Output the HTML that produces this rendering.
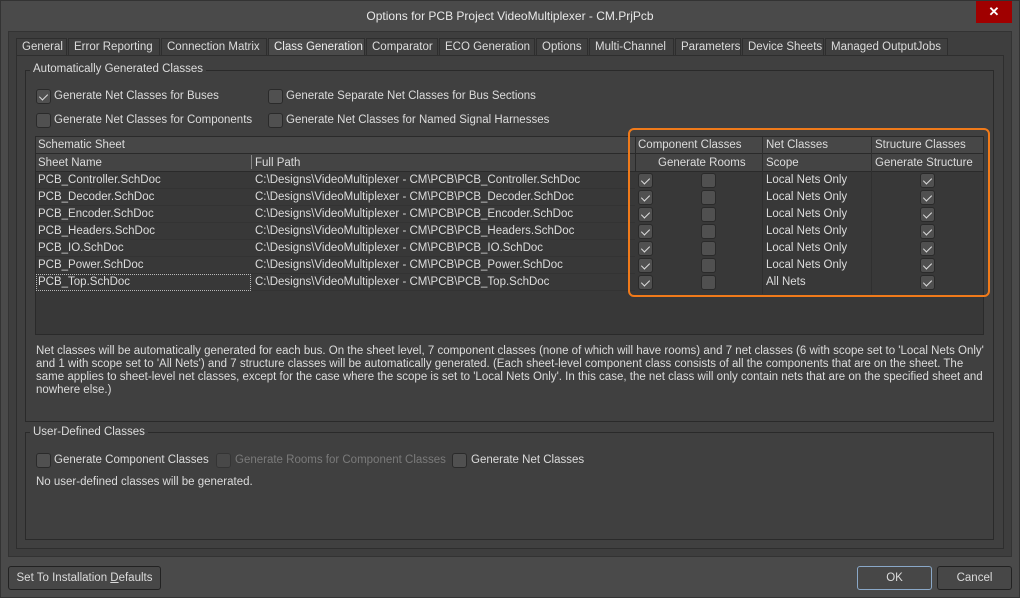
<!DOCTYPE html><html><head><style>
*{box-sizing:border-box;margin:0;padding:0}
body{width:1020px;height:598px;background:#4a4a4a;font-family:"Liberation Sans",sans-serif;font-size:11.5px;color:#dcdcdc;position:relative;overflow:hidden}
.a{position:absolute;white-space:nowrap;padding-top:1px}
.cb{position:absolute;width:15px;height:15px;border:1px solid #2a2a2a;background:#505050;border-radius:3px}
.cb.c::after{content:"";position:absolute;left:4px;top:2px;width:4px;height:7px;border:solid #ddd;border-width:0 1px 1px 0;transform:rotate(45deg)}
.tab{position:absolute;top:38px;height:18px;background:#3f3f3f;border:1px solid #2e2e2e;border-bottom:none;padding:2px 0 0 5px;white-space:nowrap;overflow:hidden}
.btn{position:absolute;height:24px;border:1px solid #222;border-radius:3px;background:#474747;text-align:center;line-height:22px}
</style></head><body>
<div class="a" style="left:0;top:0;width:1020px;height:598px;border:1px solid #333"></div>
<div class="a" style="left:0;top:8px;width:1020px;text-align:center;font-size:12px;color:#e8e8e8">Options for PCB Project VideoMultiplexer - CM.PrjPcb</div>
<div class="a" style="left:976px;top:1px;width:36px;height:22px;background:#a00000;color:#fff;text-align:center;line-height:20px;font-size:13px;font-weight:bold">✕</div>
<div class="a" style="left:8px;top:31px;width:1004px;height:526px;background:#3e3e3e;border:1px solid #333"></div>
<div class="tab" style="left:16px;width:51px">General</div>
<div class="tab" style="left:68px;width:92px">Error Reporting</div>
<div class="tab" style="left:161px;width:106px">Connection Matrix</div>
<div class="tab" style="left:268px;width:97px;background:#4a4a4a;height:19px;color:#eee">Class Generation</div>
<div class="tab" style="left:366px;width:72px">Comparator</div>
<div class="tab" style="left:439px;width:96px">ECO Generation</div>
<div class="tab" style="left:536px;width:52px">Options</div>
<div class="tab" style="left:589px;width:85px">Multi-Channel</div>
<div class="tab" style="left:675px;width:66px">Parameters</div>
<div class="tab" style="left:742px;width:82px">Device Sheets</div>
<div class="tab" style="left:825px;width:123px">Managed OutputJobs</div>
<div class="a" style="left:16px;top:55px;width:988px;height:494px;background:#404040;border:1px solid #2e2e2e"></div>
<div class="a" style="left:25px;top:70px;width:969px;height:352px;border:1px solid #2a2a2a"></div>
<div class="a" style="left:30px;top:63px;background:#404040;padding:0 3px">Automatically Generated Classes</div>
<div class="cb c" style="left:36px;top:89px"></div><div class="a" style="left:54px;top:89px">Generate Net Classes for Buses</div>
<div class="cb" style="left:268px;top:89px"></div><div class="a" style="left:286px;top:89px">Generate Separate Net Classes for Bus Sections</div>
<div class="cb" style="left:36px;top:113px"></div><div class="a" style="left:54px;top:113px">Generate Net Classes for Components</div>
<div class="cb" style="left:268px;top:113px"></div><div class="a" style="left:286px;top:113px">Generate Net Classes for Named Signal Harnesses</div>
<div class="a" style="left:35px;top:136px;width:949px;height:199px;background:#383838;border:1px solid #2a2a2a"></div>
<div class="a" style="left:36px;top:137px;width:947px;height:17px;background:#474747;border-bottom:1px solid #2a2a2a"></div>
<div class="a" style="left:36px;top:154px;width:947px;height:18px;background:#444;border-bottom:1px solid #2a2a2a"></div>
<div class="a" style="left:38px;top:138px">Schematic Sheet</div>
<div class="a" style="left:638px;top:138px">Component Classes</div>
<div class="a" style="left:766px;top:138px">Net Classes</div>
<div class="a" style="left:875px;top:138px">Structure Classes</div>
<div class="a" style="left:38px;top:156px">Sheet Name</div>
<div class="a" style="left:255px;top:156px">Full Path</div>
<div class="a" style="left:658px;top:156px">Generate Rooms</div>
<div class="a" style="left:766px;top:156px">Scope</div>
<div class="a" style="left:875px;top:156px">Generate Structure</div>
<div class="a" style="left:251px;top:155px;width:1px;height:14px;background:#888"></div>
<div class="a" style="left:635px;top:137px;width:1px;height:35px;background:#2a2a2a"></div>
<div class="a" style="left:762px;top:137px;width:1px;height:157px;background:#2f2f2f"></div>
<div class="a" style="left:871px;top:137px;width:1px;height:157px;background:#2f2f2f"></div>
<div id="rows"></div>
<div class="a" style="left:36px;top:274px;width:215px;height:17px;border:1px dotted #bbb"></div>
<div class="a" style="left:628px;top:128px;width:362px;height:169px;border:2px solid #f07a1a;border-radius:6px"></div>
<div class="a" style="left:36px;top:344px;line-height:13px;white-space:normal;width:950px">Net classes will be automatically generated for each bus. On the sheet level, 7 component classes (none of which will have rooms) and 7 net classes (6 with scope set to 'Local Nets Only' and 1 with scope set to 'All Nets') and 7 structure classes will be automatically generated. (Each sheet-level component class consists of all the components that are on the sheet. The same applies to sheet-level net classes, except for the case where the scope is set to 'Local Nets Only'. In this case, the net class will only contain nets that are on the specified sheet and nowhere else.)</div>
<div class="a" style="left:25px;top:432px;width:969px;height:108px;border:1px solid #2a2a2a"></div>
<div class="a" style="left:30px;top:426px;background:#404040;padding:0 3px">User-Defined Classes</div>
<div class="cb" style="left:36px;top:453px"></div><div class="a" style="left:54px;top:453px">Generate Component Classes</div>
<div class="cb" style="left:216px;top:453px;opacity:.5"></div><div class="a" style="left:235px;top:453px;color:#7a7a7a">Generate Rooms for Component Classes</div>
<div class="cb" style="left:452px;top:453px"></div><div class="a" style="left:471px;top:453px">Generate Net Classes</div>
<div class="a" style="left:36px;top:475px">No user-defined classes will be generated.</div>
<div class="btn" style="left:8px;top:566px;width:153px">Set To Installation <u>D</u>efaults</div>
<div class="btn" style="left:857px;top:566px;width:75px;border-color:#8aa8c8">OK</div>
<div class="btn" style="left:937px;top:566px;width:75px">Cancel</div>
<script>
var n=["PCB_Controller","PCB_Decoder","PCB_Encoder","PCB_Headers","PCB_IO","PCB_Power","PCB_Top"],h="";
n.forEach(function(s,i){var y=172+i*17;
h+='<div class="a" style="left:36px;top:'+y+'px;width:599px;height:17px;border-bottom:1px solid #333"></div>';
h+='<div class="a" style="left:38px;top:'+(y+1)+'px">'+s+'.SchDoc</div>';
h+='<div class="a" style="left:255px;top:'+(y+1)+'px">C:\\Designs\\VideoMultiplexer - CM\\PCB\\'+s+'.SchDoc</div>';
h+='<div class="cb c" style="left:638px;top:'+(y+1)+'px"></div><div class="cb" style="left:701px;top:'+(y+1)+'px"></div>';
h+='<div class="a" style="left:766px;top:'+(y+1)+'px">'+(i==6?'All Nets':'Local Nets Only')+'</div>';
h+='<div class="cb c" style="left:920px;top:'+(y+1)+'px"></div>';});
document.getElementById('rows').innerHTML=h;
</script>
</body></html>
